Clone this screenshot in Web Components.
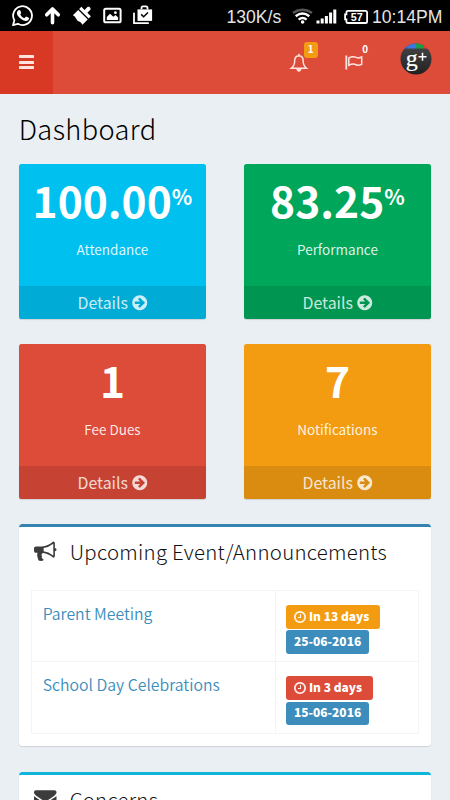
<!DOCTYPE html>
<html lang="en">
<head>
<meta charset="utf-8">
<title>Dashboard</title>
<style>
  body {
    margin: 0;
    height: 800px;
    overflow: hidden;
    background: #eaeff3;
    font-family: "Noto Sans CJK SC", "Noto Sans", sans-serif;
  }
</style>
</head>
<body>
<school-app></school-app>

<script>
const ICONS = {
  arrow: '<path d="M1413 896q0-27-18-45l-91-91-362-362q-18-18-45-18t-45 18l-91 91q-18 18-18 45t18 45l189 189h-502q-26 0-45 19t-19 45v128q0 26 19 45t45 19h502l-189 189q-19 19-19 45t19 45l91 91q18 18 45 18t45-18l362-362 91-91q18-18 18-45zm251 0q0 209-103 385.5t-279.5 279.5-385.5 103-385.5-103-279.5-279.5-103-385.5 103-385.5 279.5-279.5 385.5-103 385.5 103 279.5 279.5 103 385.5z"/>',
  clock: '<path d="M1024 544v448q0 14-9 23t-23 9h-320q-14 0-23-9t-9-23v-64q0-14 9-23t23-9h224v-352q0-14 9-23t23-9h64q14 0 23 9t9 23zm416 352q0-148-73-273t-198-198-273-73-273 73-198 198-73 273 73 273 198 198 273 73 273-73 198-198 73-273zm224 0q0 209-103 385.5t-279.5 279.5-385.5 103-385.5-103-279.5-279.5-103-385.5 103-385.5 279.5-279.5 385.5-103 385.5 103 279.5 279.5 103 385.5z"/>',
  envelope: '<path d="M1792 710v794q0 66-47 113t-113 47h-1472q-66 0-113-47t-47-113v-794q44 49 101 87 362 246 497 345 57 42 92.5 65.5t94.5 48 110 24.5h2q51 0 110-24.5t94.5-48 92.5-65.5q170-123 498-345 57-39 100-87zm0-294q0 79-49 151t-122 123q-376 261-468 325-10 7-42.5 31t-54 38.5-52 32.5-57.5 27-50 9h-2q-23 0-50-9t-57.5-27-52-32.5-54-38.5-42.5-31q-91-64-262-182.5t-205-142.5q-62-42-117-115.5t-55-136.5q0-78 41.5-130t118.5-52h1472q65 0 112.5 47t47.5 113z"/>',
  bullhorn: '<path d="M1664 640q53 0 90.5 37.5t37.5 90.5-37.5 90.5-90.5 37.5v384q0 52-38 90t-90 38q-417-347-812-380-58 19-91 66t-31 100.5 40 92.5q-20 33-23 65.5t6 58 33.5 55 48 50 61.5 50.5q-29 58-111.5 83t-168.5 11.5-132-55.5q-7-23-29.5-87.5t-32-94.5-23-89-15-101 3.5-98.5 22-110.5h-122q-66 0-113-47t-47-113v-192q0-66 47-113t113-47h480q435 0 896-384 52 0 90 38t38 90v384zm-128 604v-954q-394 302-768 343v270q377 42 768 341z"/>'
};

// Solid glyph, sized by --size
class FaIcon extends HTMLElement {
  connectedCallback() {
    this.attachShadow({ mode: 'open' }).innerHTML = `
      <style>
        :host { display: inline-block; width: var(--size, 17px); height: var(--size, 17px); flex: none; }
        svg { display: block; width: 100%; height: 100%; fill: currentColor; }
      </style>
      <svg viewBox="0 0 1792 1792">${ICONS[this.getAttribute('name')]}</svg>
    `;
  }
}

class StatusBar extends HTMLElement {
  constructor() {
    super();
    this.attachShadow({ mode: 'open' }).innerHTML = `
      <style>
        :host {
          display: flex;
          justify-content: space-between;
          height: 31px;
          background: #000;
          color: #e4e4e4;
          font: 17.600px/34px "Liberation Sans", sans-serif;
        }
        svg { display: block; }
        .right { display: flex; padding-right: 7.500px; }
        .speed { width: 64.500px; }
        .time { width: 70.500px; white-space: nowrap; }
      </style>
      <svg width="160" height="31" fill="#fff">
        <path d="M13 25.2l1.4-4.9a9.4 9.4 0 1 1 3.5 3.500z" fill="none" stroke="#fff" stroke-width="1.8" stroke-linejoin="round"/>
        <path d="M18.300 10.200q1.300-.8 2 .4l.8 2q.3.7-.9 2 1.300 2.700 4.100 3.700l1.200-1.400q.5-.5 1.100-.2l2.200 1.100q.6.400.2 1.300-.9 2.100-3.200 2-4.600-.8-8-5.300-2.100-3.300.5-5.600z"/>
        <path d="M52.500 9.300v13.500M46.700 14.800l5.800-5.800 5.800 5.800" fill="none" stroke="#fff" stroke-width="3.600" stroke-linecap="round" stroke-linejoin="round"/>
        <g transform="rotate(45 83 15)">
          <path d="M76 14.800h13.500v7.500q-2.500-1-4.500 0t-4.500 0-4.500 0z"/>
          <path d="M76 13.500v-3.200h4.500V5.500q2-1.600 4 0v4.800h5v3.200z"/>
        </g>
        <rect x="104.200" y="8.700" width="16.400" height="13.600" rx="1.600" fill="none" stroke="#fff" stroke-width="2"/>
        <path d="M106.800 19.900v-3l3.200-3.200 3.400 3 2.200-1.600 2.500 2.400v2.400z"/>
        <circle cx="115.400" cy="12.700" r="1.400"/>
        <path d="M137.500 9.400h14.600v11.500h-14.600z"/>
        <path d="M141.500 9.500V8q0-1.700 1.500-1.700h3q1.500 0 1.500 1.700v1.500" fill="none" stroke="#fff" stroke-width="1.800"/>
        <path d="M134 12.700v10.500h14.800" fill="none" stroke="#fff" stroke-width="1.800"/>
        <path d="M141.200 14.400l2.400 2.400 4.400-4.300" fill="none" stroke="#000" stroke-width="1.500"/>
      </svg>
      <div class="right">
        <span class="speed">130K/s</span>
        <svg width="81" height="31" fill="#fff">
          <g fill="none" stroke-width="2.500">
            <path d="M2 12.900q9.500-6.500 19 0" stroke="#555"/>
            <path d="M4.700 16.200q6.800-5.300 13.600 0" stroke="#fff"/>
            <path d="M7.600 19.600q4-3.300 8 0" stroke="#fff"/>
          </g>
          <circle cx="11.600" cy="22" r="1.800"/>
          <path d="M25.500 20.500h3v3h-3zM29.700 18.500h3v5h-3zM33.900 16h3v7.500h-3zM38.100 12.500h3v11h-3zM42.300 9.500h3v14h-3z"/>
          <path d="M57 10.800h17.500q1.600 0 1.600 1.600v9q0 1.600-1.600 1.600H57q-1.600 0-1.600-1.600v-2h-1.300v-5h1.300v-2q0-1.600 1.600-1.600z" fill="none" stroke="#fff" stroke-width="1.800"/>
          <text x="65.800" y="20.800" text-anchor="middle" font-family="Liberation Sans" font-size="10.800" font-weight="bold">57</text>
        </svg>
        <span class="time">10:14PM</span>
      </div>
    `;
  }
}

class NavBar extends HTMLElement {
  constructor() {
    super();
    this.attachShadow({ mode: 'open' }).innerHTML = `
      <style>
        :host {
          display: flex;
          justify-content: space-between;
          height: 62.500px;
          background: #dd4b39;
          color: #fff;
        }
        .toggle {
          display: grid;
          place-content: center;
          gap: 2.300px;
          width: 52.500px;
          background: #d73925;
        }
        .toggle i { width: 15.500px; height: 3px; background: #ffe3df; border-radius: .5px; }
        .menu { display: flex; }
        .item { position: relative; width: 56px; }
        .item svg { display: block; fill: none; stroke: #ffe3df; stroke-width: 1.500; }
        .count {
          position: absolute;
          top: 11px;
          left: 28px;
          width: 13.500px;
          height: 15.500px;
          border-radius: 3px;
          font-size: 9.800px;
          font-weight: bold;
          line-height: 14px;
          text-align: center;
        }
        .warn { background: #f39c12; }
        .plus { padding: 11.700px 18px 0 12px; }
      </style>
      <div class="toggle"><i></i><i></i><i></i></div>
      <div class="menu">
        <div class="item">
          <svg width="56" height="62"><path d="M15.300 37.300q3.400-2.600 3.400-7.800 0-4.300 4.200-4.700 4.200.4 4.200 4.700 0 5.200 3.400 7.800zM22.900 24.800v-2"/><path d="M20.800 38.300q.4 2 2.100 2t2.100-2z" fill="#ffe3df" stroke-width="1"/></svg>
          <span class="count warn">1</span>
        </div>
        <div class="item">
          <svg width="56" height="62"><path d="M14.300 24.500v14" stroke-width="1.800"/><path d="M16.800 27q4-2.200 7.300-.6 2.500 1.200 5.600-.4v7.300q-3.100 1.600-5.600.4-3.300-1.600-7.300.6z"/></svg>
          <span class="count" style="left:26.500px">0</span>
        </div>
        <div class="plus">
          <svg width="32" height="32">
            <defs><linearGradient id="g" x2="0" y2="1"><stop offset="0" stop-color="#484848"/><stop offset="1" stop-color="#202020"/></linearGradient>
            <clipPath id="c"><circle cx="16" cy="16" r="15.500"/></clipPath></defs>
            <g clip-path="url(#c)">
              <path d="M0 0h32v32H0z" fill="url(#g)"/>
              <path d="M0 0h9v5.500H0z" fill="#3b6fd0"/>
              <path d="M8.500 0h7.700v5.500H8.500z" fill="#3d78e0"/>
              <path d="M16 0h8v5.500h-8z" fill="#1c9b4c"/>
              <path d="M24 0h3v5.500h-3z" fill="#e8402c"/>
              <path d="M27 0h5v5.500h-5z" fill="#f5b916"/>
            </g>
            <text x="5.800" y="22.800" fill="#fff" stroke="#fff" stroke-width=".2" font-family="Liberation Serif" font-size="24">g</text>
            <path d="M18.500 13.800h8M22.500 9.800v8" stroke="#fff" stroke-width="1.500"/>
          </svg>
        </div>
      </div>
    `;
  }
}

class StatCard extends HTMLElement {
  connectedCallback() {
    const unit = this.hasAttribute('unit') ? `<sup>${this.getAttribute('unit')}</sup>` : '';
    this.attachShadow({ mode: 'open' }).innerHTML = `
      <style>
        :host {
          display: flex;
          flex-direction: column;
          height: 155px;
          border-radius: 2.500px;
          overflow: hidden;
          box-shadow: 0 1px 1px rgba(0, 0, 0, .12);
          background: ${this.getAttribute('color')};
          color: #fff;
          text-align: center;
        }
        .value {
          display: flex;
          justify-content: center;
          height: 72px;
          font-size: 42.500px;
          font-weight: bold;
          line-height: 71px;
        }
        sup { font-size: 21.300px; font-weight: bold; line-height: 64px; vertical-align: baseline; }
        .label { flex: 1; font-size: 13.500px; line-height: 27px; color: rgba(255, 255, 255, .88); }
        .more {
          display: flex;
          justify-content: center;
          align-items: center;
          gap: 3px;
          height: 33px;
          padding-left: 1px;
          background: rgba(0, 0, 0, .1);
          color: rgba(255, 255, 255, .8);
          font-size: 15.900px;
          line-height: 32px;
        }
      </style>
      <div class="value">${this.getAttribute('value')}${unit}</div>
      <div class="label"><slot></slot></div>
      <div class="more">Details <fa-icon name="arrow" style="--size:17.500px"></fa-icon></div>
    `;
  }
}

class BoxPanel extends HTMLElement {
  connectedCallback() {
    this.attachShadow({ mode: 'open' }).innerHTML = `
      <style>
        :host {
          display: block;
          box-sizing: border-box;
          height: 222px;
          border-top: 3.500px solid ${this.getAttribute('color')};
          border-radius: 3.500px;
          background: #fff;
          box-shadow: 0 1px 1px rgba(0, 0, 0, .12);
        }
        header {
          display: flex;
          align-items: center;
          gap: 13px;
          height: 48px;
          padding-left: 15.500px;
          color: #3c3c3c;
        }
        h3 { margin: 0; font-size: 20.400px; font-weight: 300; letter-spacing: .27px; line-height: 46px; white-space: nowrap; color: #111; }
        .body { padding: 15px 12.500px 0; }
      </style>
      <header><fa-icon name="${this.getAttribute('icon')}" style="--size:22.500px"></fa-icon><h3>${this.getAttribute('heading')}</h3></header>
      <div class="body"><slot></slot></div>
    `;
  }
}

class DateLabel extends HTMLElement {
  connectedCallback() {
    const icon = this.hasAttribute('clock') ? '<fa-icon name="clock" style="--size:14px"></fa-icon>' : '';
    this.attachShadow({ mode: 'open' }).innerHTML = `
      <style>
        :host {
          display: flex;
          align-items: center;
          gap: 2px;
          box-sizing: border-box;
          width: fit-content;
          height: 23.700px;
          padding: 0 7.700px;
          border-radius: 3px;
          background: ${this.getAttribute('color')};
          color: #fff;
          font-size: 11.950px;
          font-weight: 900;
          line-height: 20px;
          white-space: nowrap;
        }
        :host([clock]) { padding-right: 10.700px; }
        span { padding-bottom: 2px; }
        fa-icon { margin-left: -1px; opacity: .9; }
      </style>
      ${icon}<span><slot></slot></span>
    `;
  }
}

class EventRow extends HTMLElement {
  constructor() {
    super();
    this.attachShadow({ mode: 'open' }).innerHTML = `
      <style>
        :host {
          display: grid;
          grid-template-columns: 244px 1fr;
          box-sizing: border-box;
          height: 71.300px;
          border-bottom: 1.500px solid #f4f4f4;
        }
        .title { padding: 10px 10px 10px 10.500px; border-right: 1.500px solid #f4f4f4; color: #3c8dbc; font-size: 15.800px; font-weight: 350; line-height: 26px; }
        .dates { display: grid; align-content: start; gap: 1.600px; padding: 14px 10px 0; }
      </style>
      <div class="title"><slot></slot></div>
      <div class="dates"><slot name="date"></slot></div>
    `;
  }
}

class SchoolApp extends HTMLElement {
  constructor() {
    super();
    this.attachShadow({ mode: 'open' }).innerHTML = `
      <style>
        :host { display: block; height: 800px; overflow: hidden; }
        main { padding: 0 18.700px; }
        h1 { margin: 0; height: 70.500px; font-size: 27.200px; font-weight: 300; letter-spacing: .4px; line-height: 68px; color: #000; }
        .cards { display: grid; grid-template-columns: 187.500px 187.500px; gap: 25px 37.500px; }
        .panels { display: grid; gap: 25.500px; padding-top: 25px; }
        .table { border: solid #f4f4f4; border-width: 1.500px 1.500px 0; }
      </style>
      <status-bar></status-bar>
      <nav-bar></nav-bar>
      <main>
        <h1>Dashboard</h1>
        <section class="cards">
          <stat-card color="#00c0ef" value="100.00" unit="%">Attendance</stat-card>
          <stat-card color="#00a65a" value="83.25" unit="%">Performance</stat-card>
          <stat-card color="#dd4b39" value="1">Fee Dues</stat-card>
          <stat-card color="#f39c12" value="7">Notifications</stat-card>
        </section>
        <section class="panels">
          <box-panel color="#3583b0" icon="bullhorn" heading="Upcoming Event/Announcements">
            <div class="table">
              <event-row>Parent Meeting
                <date-label slot="date" color="#f39c12" clock>In 13 days</date-label>
                <date-label slot="date" color="#3c8dbc">25-06-2016</date-label>
              </event-row>
              <event-row>School Day Celebrations
                <date-label slot="date" color="#dd4b39" clock>In 3 days</date-label>
                <date-label slot="date" color="#3c8dbc">15-06-2016</date-label>
              </event-row>
            </div>
          </box-panel>
          <box-panel color="#12b5da" icon="envelope" heading="Concerns"></box-panel>
        </section>
      </main>
    `;
  }
}

customElements.define('fa-icon', FaIcon);
customElements.define('status-bar', StatusBar);
customElements.define('nav-bar', NavBar);
customElements.define('stat-card', StatCard);
customElements.define('box-panel', BoxPanel);
customElements.define('date-label', DateLabel);
customElements.define('event-row', EventRow);
customElements.define('school-app', SchoolApp);
</script>
</body>
</html>
